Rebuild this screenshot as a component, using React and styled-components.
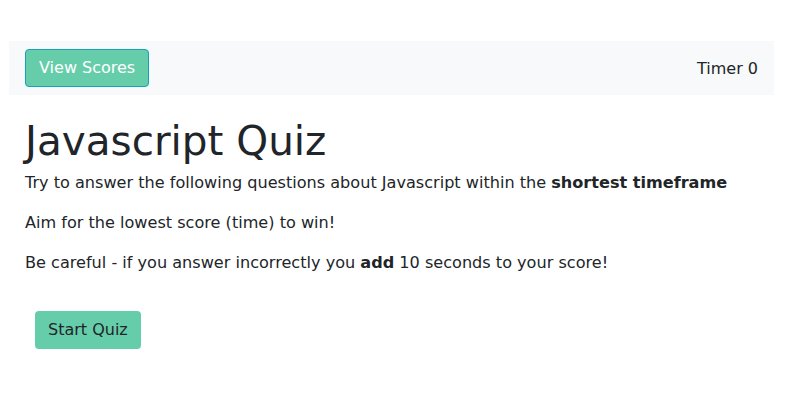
import React, { useState } from "react";
import styled, { createGlobalStyle } from "styled-components";

const GlobalStyle = createGlobalStyle`
  body {
    margin: 0;
    background: #fff;
    color: #212529;
    font-family: "DejaVu Sans", Verdana, sans-serif;
    font-size: 16px;
    line-height: 1.5;
  }
`;

const Page = styled.div`
  padding: 41px 21px 0 9px;
`;

const Navbar = styled.nav`
  display: flex;
  justify-content: space-between;
  align-items: center;
  padding: 8px 16px;
  background-color: #f8f9fa;
`;

const ScoresButton = styled.button`
  font-family: inherit;
  font-size: 16px;
  line-height: 24px;
  padding: 6px 13px;
  color: #fff;
  background-color: #66cdaa;
  border: 1px solid #17a2b8;
  border-radius: 4px;
  cursor: pointer;
`;

const Timer = styled.span`
  font-size: 16px;
  padding-top: 2px;
`;

const Content = styled.main`
  padding: 22px 16px 0;
`;

const Title = styled.h1`
  margin: 0 0 5px;
  font-size: 40.5px;
  font-weight: 400;
  line-height: 1.2;
`;

const Text = styled.p`
  margin: 0 0 16px;
  font-size: 16.1px;
`;

const StartButton = styled.button`
  margin: 20px 0 0 10px;
  font-family: inherit;
  font-size: 16px;
  line-height: 24px;
  padding: 7px 13px;
  color: #212529;
  background-color: #66cdaa;
  border: none;
  border-radius: 4px;
  cursor: pointer;
`;

export default function App() {
  const [time] = useState(0);

  return (
    <>
      <GlobalStyle />
      <Page>
        <Navbar>
          <ScoresButton>View Scores</ScoresButton>
          <Timer>Timer {time}</Timer>
        </Navbar>
        <Content>
          <Title>Javascript Quiz</Title>
          <Text>
            Try to answer the following questions about Javascript within the{" "}
            <b>shortest timeframe</b>
          </Text>
          <Text>Aim for the lowest score (time) to win!</Text>
          <Text>
            Be careful - if you answer incorrectly you <b>add</b> 10 seconds to
            your score!
          </Text>
          <StartButton>Start Quiz</StartButton>
        </Content>
      </Page>
    </>
  );
}
